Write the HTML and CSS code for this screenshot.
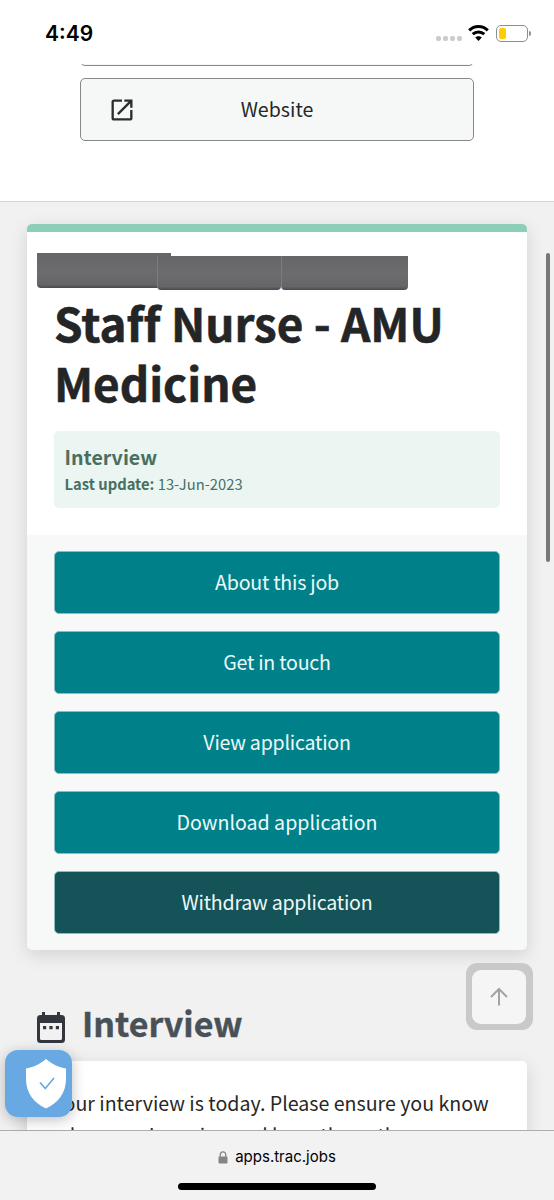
FILE: index.html
```html
<!DOCTYPE html>
<html lang="en">
<head>
<meta charset="utf-8">
<title>Staff Nurse - AMU Medicine</title>
<link rel="stylesheet" href="styles.css">
</head>
<body>
<div class="phone">
  <header class="status">
    <span class="clock">4:49</span>
    <div class="indicators">
      <div class="dots"><i></i><i></i><i></i><i></i></div>
      <svg class="wifi" width="21" height="16" viewBox="0 0 21 16" fill="none" stroke="#000" stroke-width="3">
        <path d="M1.2 5.4C6.5.3 14.500.3 19.800 5.400"/>
        <path d="M4.700 9.200C8 6.200 13 6.200 16.300 9.200"/>
        <path d="M10.500 16 7.200 12.600C9 10.800 12 10.800 13.800 12.600Z" fill="#000" stroke="none"/>
      </svg>
      <div class="battery"><span class="cell"><i></i></span><span class="tip"></span></div>
    </div>
  </header>
  <main class="page">
    <section class="links">
      <div class="link-button cut"></div>
      <div class="link-button">
        <svg width="28" height="28" viewBox="0 0 24 24" fill="#2b2d2f"><path d="M19 19H5V5h7V3H5c-1.110 0-2 .9-2 2v14c0 1.100.89 2 2 2h14c1.100 0 2-.9 2-2v-7h-2v7zM14 3v2h3.590l-9.830 9.830 1.410 1.410L19 6.410V10h2V3h-7z"/></svg>
        <span>Website</span>
      </div>
    </section>
    <section class="content">
      <article class="card">
        <div class="card-head">
          <div class="redacted"><i></i><i></i><i></i></div>
          <h1>Staff Nurse - AMU Medicine</h1>
          <div class="state">
            <strong class="state-name">Interview</strong>
            <span class="state-date"><b>Last update:</b> 13-Jun-2023</span>
          </div>
        </div>
        <div class="actions">
          <div class="action">About this job</div>
          <div class="action">Get in touch</div>
          <div class="action">View application</div>
          <div class="action wide">Download application</div>
          <div class="action dark">Withdraw application</div>
        </div>
      </article>
      <div class="section-title">
        <svg width="28" height="32" viewBox="0 0 28 32" fill="#33373d"><path fill-rule="evenodd" d="M5 0h3v3h12V0h3v3h1.500A3.500 3.500 0 0 1 28 6.500v21a3.500 3.500 0 0 1-3.500 3.500h-21A3.500 3.500 0 0 1 0 27.500v-21A3.500 3.500 0 0 1 3.500 3H5zM3 11v15.500A1.500 1.500 0 0 0 4.500 28h19a1.500 1.500 0 0 0 1.500-1.500V11z"/><path d="M6 14h3.200v3.200H6zM12.400 14h3.200v3.200h-3.200zM18.800 14H22v3.200h-3.200z"/></svg>
        <h2>Interview</h2>
      </div>
      <article class="note">Your interview is today. Please ensure you know<br>where you're going and have the path</article>
    </section>
  </main>
  <footer class="browser-bar">
    <div class="address">
      <svg width="10" height="13" viewBox="0 0 10 13"><path d="M2.300 6V3.700a2.700 2.900 0 0 1 5.400 0V6" fill="none" stroke="#858585" stroke-width="1.300"/><rect x=".5" y="5.500" width="9" height="7" rx="1" fill="#858585"/></svg>
      <span>apps.trac.jobs</span>
    </div>
    <div class="home"></div>
  </footer>
  <div class="scrollbar"></div>
  <div class="to-top"><div class="key"><svg width="18" height="19" viewBox="0 0 18 19" fill="none" stroke="#a3a3a3" stroke-width="2"><path d="M9 18.500V2M1 10 9 2l8 8"/></svg></div></div>
  <div class="shield"><svg width="40" height="50" viewBox="0 0 40 50"><path d="M20 0C27 6 33 8 40 9.500V20C40 34 32 44 20 49.500 8 44 0 34 0 20V9.500C7 8 13 6 20 0z" fill="#fff"/><path d="M14 23.500l5.300 6L28 19" fill="none" stroke="#68a8e3" stroke-width="1.700"/></svg></div>
</div>
</body>
</html>
```
FILE: styles.css
```css
* { box-sizing: border-box; }
body { margin: 0; background: #f1f1f1; }
h1, h2 { margin: 0; }
svg { display: block; }

.phone {
  position: relative;
  width: 554px;
  height: 1200px;
  overflow: hidden;
  display: flex;
  flex-direction: column;
  color: #272727;
  font-family: "Noto Sans CJK SC", "Noto Sans CJK JP", "Noto Sans", sans-serif;
  font-size: 19.6px;
  font-variant-ligatures: none;
}

.status {
  flex: none;
  height: 64px;
  padding: 2px 23px 0 45px;
  display: flex;
  align-items: center;
  justify-content: space-between;
  background: #fff;
  color: #000;
}
.clock { padding-top: 2px; font: 600 21px/26px Inter, sans-serif; }
.indicators { display: flex; align-items: center; height: 18px; }
.dots { display: flex; gap: 2px; padding-top: 10px; margin-right: 6px; }
.dots i { width: 5px; height: 5px; border-radius: 2px; background: #ccc; }
.wifi { margin-right: 7px; }
.battery { display: flex; align-items: center; gap: 1px; }
.cell { width: 32px; height: 17px; padding: 2px; border: 1px solid #8d8d8d; border-radius: 5px; }
.cell i { display: block; width: 7px; height: 11px; border-radius: 2px; background: #fc0; }
.tip { width: 2px; height: 5px; border-radius: 0 2px 2px 0; background: #8d8d8d; }

.page { flex: 1; min-height: 0; overflow: hidden; display: flex; flex-direction: column; }
.links {
  flex: none;
  height: 138px;
  padding: 0 80px;
  overflow: hidden;
  display: flex;
  flex-direction: column;
  gap: 12px;
  background: #fff;
  border-bottom: 1px solid #d6d6d6;
}
.link-button {
  flex: none;
  height: 63px;
  display: flex;
  align-items: center;
  padding-left: 27px;
  border: 1px solid #858788;
  border-radius: 5px;
  background: #f6f8f8;
}
.link-button.cut { margin-top: -61px; }
.link-button span { flex: 1; text-align: center; padding: 0 55px 2px 0; }

.content { flex: none; padding: 22px 27px 0; }
.card {
  height: 726px;
  border-top: 8px solid #8ccfb6;
  border-radius: 5px;
  background: #f7f9f8;
  box-shadow: 0 5px 18px rgba(0, 0, 0, .13);
}
.card-head { height: 303px; padding: 21px 27px 0; background: #fff; }
.redacted { display: flex; height: 37px; margin-left: -17px; }
.redacted i {
  flex: none;
  width: 127px;
  height: 34px;
  margin-top: 3px;
  border-radius: 0 0 4px 4px;
  border-left: 1px solid #78799a;
  background: linear-gradient(#666668, #6c6c6e 55%, #656568 90%, #48484f);
}
.redacted i:first-child { width: 134px; height: 35px; margin: 0 -14px 0 0; border-left: 0; }
.redacted i:nth-child(2) { width: 124px; }
h1 { margin-top: 2px; font-size: 45.8px; line-height: 60px; font-weight: 700; color: #242526; -webkit-text-stroke: .6px #242526; }
.state {
  height: 77px;
  margin: 19px 0 0 -.5px;
  padding: 11px;
  display: flex;
  flex-direction: column;
  border-radius: 5px;
  background: #ebf5f2;
  color: #48705f;
}
.state-name { line-height: 30px; font-size: 19.6px; }
.state-date { line-height: 24px; font-size: 14.75px; }
.actions { padding: 16px 27px; display: grid; gap: 17px; }
.action {
  height: 63px;
  padding-bottom: 3px;
  display: grid;
  place-items: center;
  border: 1px solid #8ebdbd;
  border-radius: 5px;
  background: #00818a;
  color: #eefafa;
  letter-spacing: -.24px;
}
.action.wide { letter-spacing: 0; }
.action.dark { background: #145458; }

.section-title { display: flex; align-items: center; gap: 17px; height: 60px; margin-top: 46px; padding-left: 10px; }
.section-title svg { margin-top: 4px; }
h2 { padding-bottom: 6px; font-size: 34px; line-height: 54px; font-weight: 700; color: #485058; -webkit-text-stroke: .4px #485058; }
.note {
  height: 160px;
  margin-top: 5px;
  padding: 26px 27px 0;
  border-radius: 5px;
  background: #fff;
  box-shadow: 0 5px 18px rgba(0, 0, 0, .13);
  line-height: 32px;
  white-space: nowrap;
}

.browser-bar {
  flex: none;
  height: 70px;
  padding-top: 15px;
  display: flex;
  flex-direction: column;
  align-items: center;
  gap: 14.5px;
  border-top: 1px solid #adadad;
  background: #f2f2f2;
}
.address { display: flex; align-items: center; gap: 7px; color: #000; font: 15px/22px Inter, sans-serif; }
.home { width: 198px; height: 7px; border-radius: 4px; background: #000; }

.scrollbar { position: absolute; left: 546px; top: 253px; width: 4px; height: 309px; border-radius: 2px; background: #777; }
.to-top {
  position: absolute;
  left: 465.5px;
  top: 963px;
  width: 67px;
  height: 67px;
  display: grid;
  place-items: center;
  border-radius: 11px;
  background: #c9c9c9;
}
.key { width: 54px; height: 54px; display: grid; place-items: center; border-radius: 9px; background: #f5f5f5; }
.shield {
  position: absolute;
  left: 5px;
  top: 1050px;
  width: 67px;
  height: 67px;
  padding: 9px 0 0 21px;
  border-radius: 13px;
  background: #68a8e3;
  box-shadow: 0 3px 14px rgba(0, 0, 0, .25);
}
```
